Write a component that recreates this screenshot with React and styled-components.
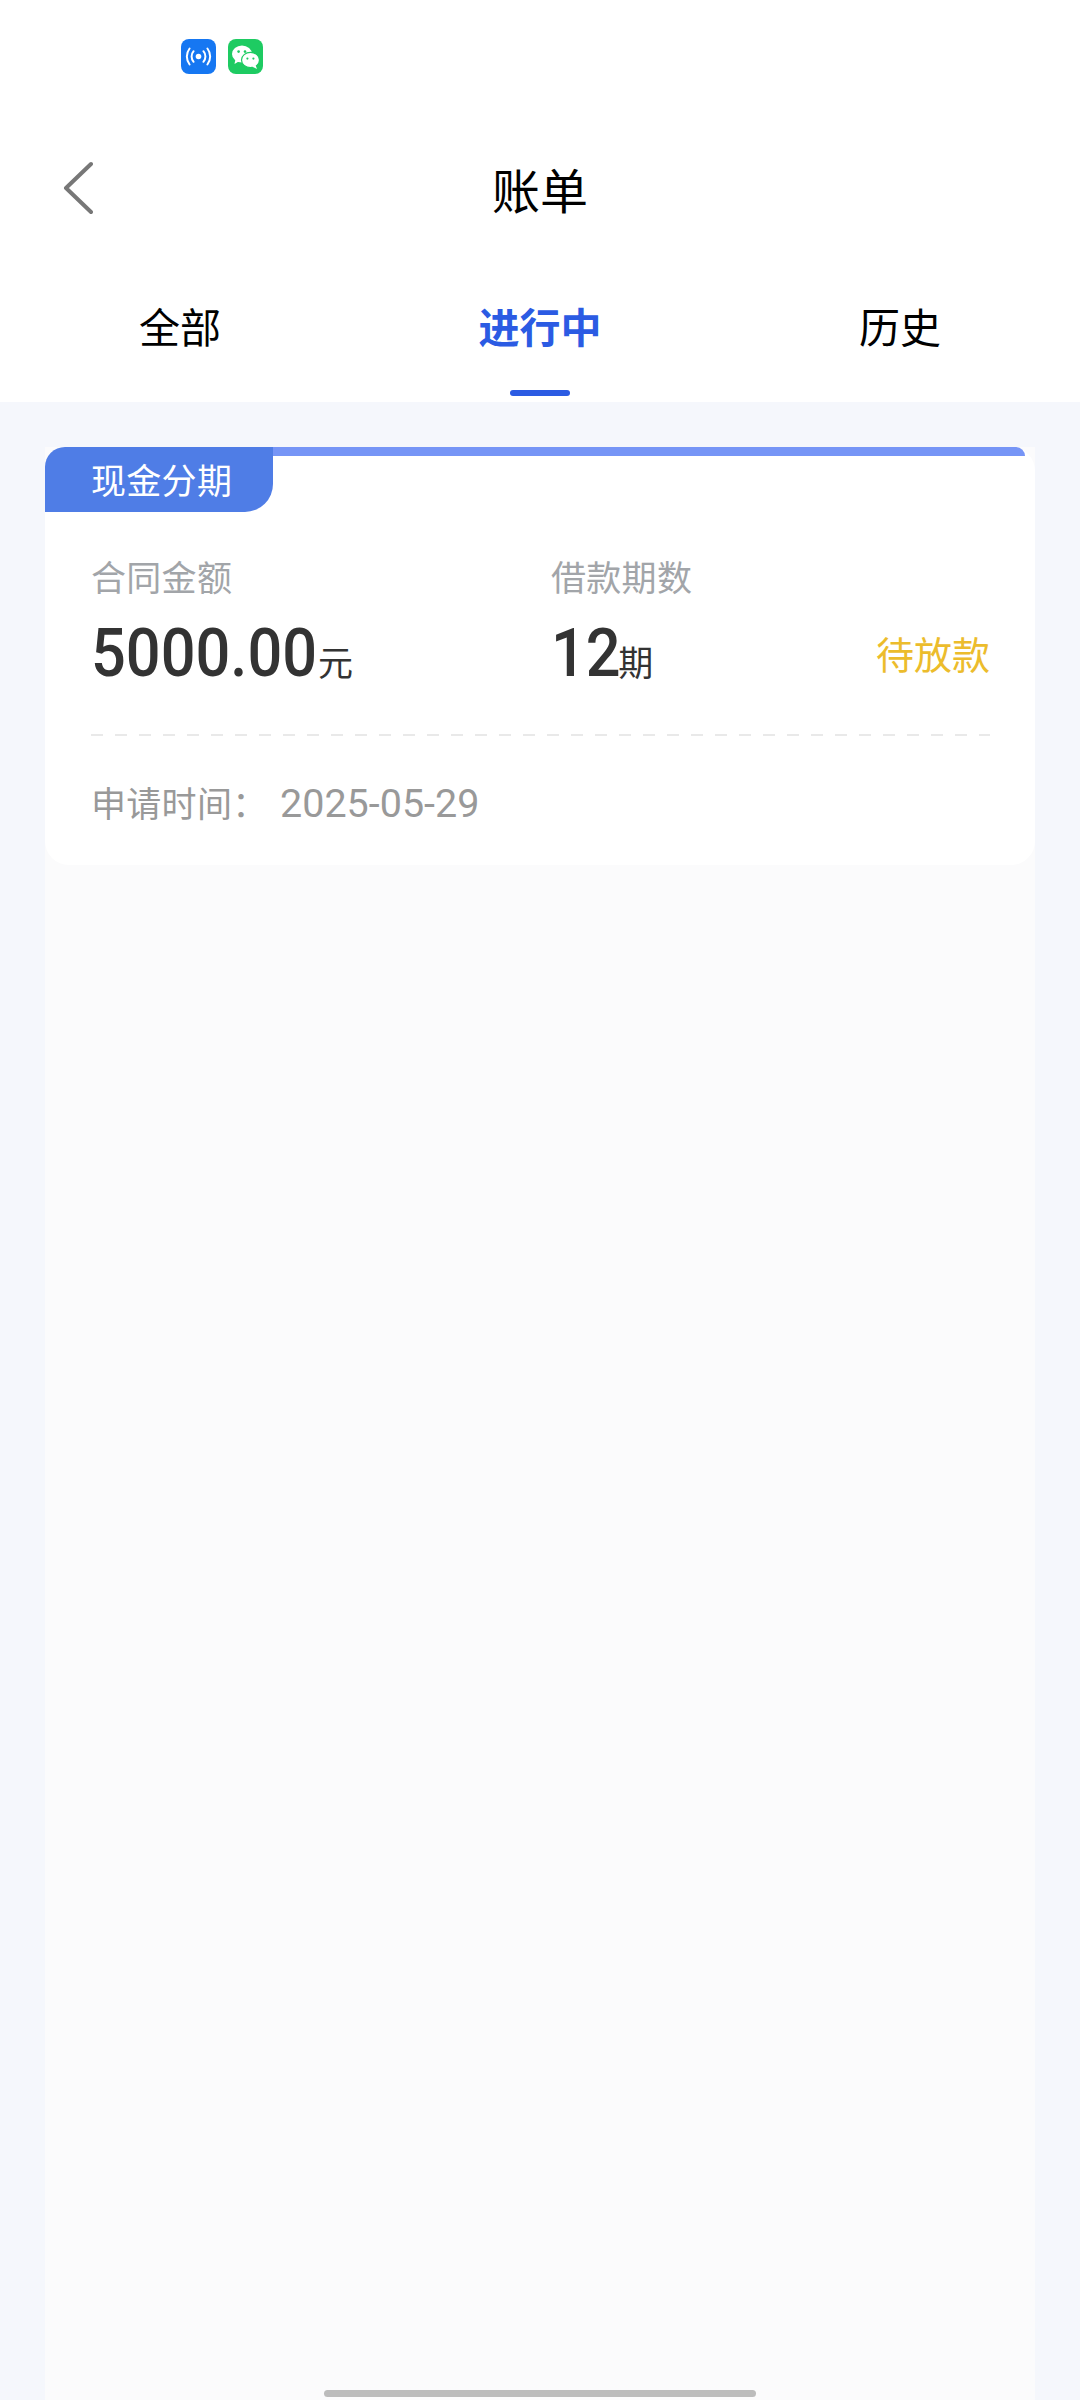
import React from "react";
import styled, { createGlobalStyle } from "styled-components";

const Global = createGlobalStyle`
  html, body { margin: 0; padding: 0; background: #f5f7fc; }
  body { font-family: "Roboto", "Noto Sans CJK SC", sans-serif; }
  * { box-sizing: border-box; }
`;

const CJK = `"Noto Sans CJK SC", "Noto Sans", sans-serif`;
const NUM = `"Roboto", "Noto Sans CJK SC", sans-serif`;

const Screen = styled.div`
  position: relative;
  width: 1080px;
  height: 2400px;
  overflow: hidden;
  background: #f5f7fc;
  display: flex;
  flex-direction: column;
`;

const Top = styled.header`
  background: #fff;
  height: 402px;
  flex: none;
  display: flex;
  flex-direction: column;
`;

const StatusBar = styled.div`
  height: 132px;
  padding: 39px 0 0 181px;
  display: flex;
  gap: 12px;
  align-items: flex-start;
`;

const AppBadge = styled.div`
  width: 35px;
  height: 35px;
  border-radius: 8px;
  background: ${(p) => p.$bg};
  display: flex;
  align-items: center;
  justify-content: center;
`;

const NavBar = styled.div`
  height: 112px;
  display: grid;
  grid-template-columns: 1fr auto 1fr;
  align-items: center;
  color: #000;
`;

const Back = styled.svg`
  width: 30px;
  height: 54px;
  margin-left: 63px;
  display: block;
`;

const Title = styled.h1`
  margin: 0;
  font: 400 48px/60px ${CJK};
  color: #000;
  text-align: center;
`;

const Tabs = styled.nav`
  flex: 1;
  display: grid;
  grid-template-columns: repeat(3, 360px);
`;

const Tab = styled.div`
  position: relative;
  padding-top: 53px;
  text-align: center;
  font: ${(p) => (p.$active ? 700 : 400)} 41px/56px ${CJK};
  color: ${(p) => (p.$active ? "#2b5be3" : "#000")};
`;

const Underline = styled.span`
  position: absolute;
  left: 150px;
  bottom: 6px;
  width: 60px;
  height: 6px;
  border-radius: 3px;
  background: #2b5be3;
`;

const Content = styled.main`
  flex: 1;
  padding: 45px 45px 0;
  display: flex;
`;

const Panel = styled.section`
  flex: 1;
  background: #fbfbfc;
`;

const Card = styled.article`
  height: 418px;
  background: #fff;
  border-radius: 24px;
  display: flex;
  flex-direction: column;
`;

const Ribbon = styled.div`
  height: 9px;
  margin: 0 10px 0 100px;
  border-radius: 0 12px 0 0;
  background: #7695f6;
`;

const Tag = styled.div`
  width: 228px;
  height: 65px;
  margin-top: -9px;
  padding-left: 46px;
  border-radius: 20px 0 28px 0;
  background: #4f7de6;
  color: #fff;
  font: 400 35px/64px ${CJK};
  letter-spacing: 0.3px;
`;

const Stats = styled.div`
  margin-top: 39px;
  padding: 0 45px 0 46px;
  display: grid;
  grid-template-columns: 460px 1fr auto;
  align-items: end;
`;

const Stat = styled.div`
  display: flex;
  flex-direction: column;
`;

const Label = styled.div`
  font: 400 35px/50px ${CJK};
  letter-spacing: 0.3px;
  color: #a2a5a9;
`;

const Value = styled.div`
  margin-top: 14px;
  height: 76px;
  display: flex;
  align-items: baseline;
  color: #333;
`;

const Number = styled.span`
  display: inline-block;
  font: 500 67px/76px ${NUM};
  transform: scaleX(0.915);
  transform-origin: left center;
  margin-right: ${(p) => p.$trim}px;
`;

const Unit = styled.span`
  font: 400 35px/40px ${CJK};
  color: #333;
`;

const Status = styled.div`
  margin-bottom: 12px;
  font: 400 38px/52px ${CJK};
  color: #ecbc2c;
`;

const Dashes = styled.hr`
  margin: 43px 45px 0 46px;
  border: 0;
  height: 2px;
  background: repeating-linear-gradient(90deg, #e9e9e9 0 12px, transparent 12px 24px);
`;

const Meta = styled.div`
  margin-top: 40px;
  padding-left: 46px;
  display: flex;
  align-items: baseline;
  color: #999;
`;

const MetaKey = styled.span`
  width: 189px;
  font: 400 35px/52px ${CJK};
  letter-spacing: 0.3px;
`;

const MetaValue = styled.span`
  font: 400 39.5px/52px ${NUM};
`;

const HomeBar = styled.div`
  position: absolute;
  left: 324px;
  bottom: 3px;
  width: 432px;
  height: 7px;
  border-radius: 4px;
  background: #bcbcbc;
`;

export default function App() {
  return (
    <Screen>
      <Global />
      <Top>
        <StatusBar>
          <AppBadge $bg="#1677f2">
            <svg width="27" height="19" viewBox="0 0 27 19" fill="none" stroke="#fff" strokeWidth="2" strokeLinecap="round">
              <circle cx="13.5" cy="9.5" r="2.8" fill="#fff" stroke="none" />
              <path d="M8.6 4.2a8 8 0 0 0 0 10.6" />
              <path d="M18.4 4.2a8 8 0 0 1 0 10.6" />
              <path d="M4.6 1.5a13 13 0 0 0 0 16" />
              <path d="M22.4 1.5a13 13 0 0 1 0 16" />
            </svg>
          </AppBadge>
          <AppBadge $bg="#1ecb62">
            <svg width="29" height="26" viewBox="0 0 29 26">
              <ellipse cx="11" cy="10" rx="10" ry="8.6" fill="#fff" />
              <path d="M4.5 15l-1 5 5-3z" fill="#fff" />
              <ellipse cx="19.5" cy="16" rx="9" ry="7.6" fill="#fff" stroke="#1ecb62" strokeWidth="1.2" />
              <path d="M24.5 21l1.5 4-5-2.5z" fill="#fff" />
              <circle cx="7.6" cy="7.6" r="1.3" fill="#1ecb62" />
              <circle cx="14" cy="7.6" r="1.3" fill="#1ecb62" />
              <circle cx="16.4" cy="14.6" r="1.1" fill="#1ecb62" />
              <circle cx="22.4" cy="14.6" r="1.1" fill="#1ecb62" />
            </svg>
          </AppBadge>
        </StatusBar>
        <NavBar>
          <Back viewBox="0 0 30 54" fill="none" stroke="#777" strokeWidth="4" strokeLinecap="round" strokeLinejoin="round">
            <path d="M28 3 3 27l25 24" />
          </Back>
          <Title>账单</Title>
          <span />
        </NavBar>
        <Tabs>
          <Tab>全部</Tab>
          <Tab $active>
            进行中
            <Underline />
          </Tab>
          <Tab>历史</Tab>
        </Tabs>
      </Top>
      <Content>
        <Panel>
          <Card>
            <Ribbon />
            <Tag>现金分期</Tag>
            <Stats>
              <Stat>
                <Label>合同金额</Label>
                <Value>
                  <Number $trim={-20}>5000.00</Number>
                  <Unit>元</Unit>
                </Value>
              </Stat>
              <Stat>
                <Label>借款期数</Label>
                <Value>
                  <Number $trim={-9}>12</Number>
                  <Unit>期</Unit>
                </Value>
              </Stat>
              <Status>待放款</Status>
            </Stats>
            <Dashes />
            <Meta>
              <MetaKey>申请时间：</MetaKey>
              <MetaValue>2025-05-29</MetaValue>
            </Meta>
          </Card>
        </Panel>
      </Content>
      <HomeBar />
    </Screen>
  );
}
